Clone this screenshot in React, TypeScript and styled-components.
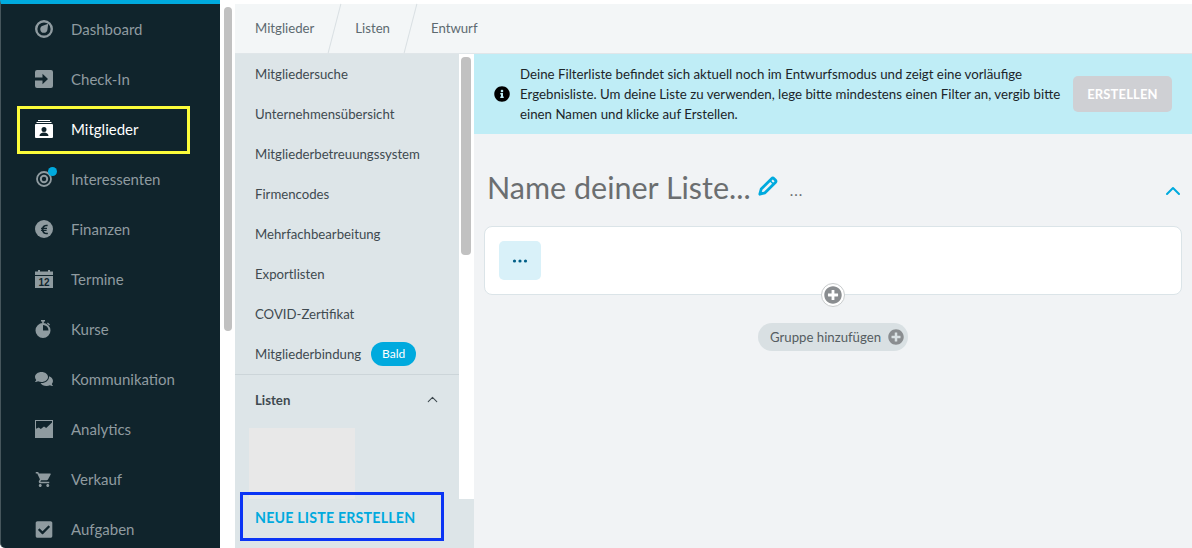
import React from "react";
import styled, { createGlobalStyle } from "styled-components";
import { FaComments, FaCheckSquare, FaInfoCircle, FaPlusCircle, FaEuroSign } from "react-icons/fa";
import { MdShoppingCart } from "react-icons/md";
import { ChevronUp } from "lucide-react";

const GlobalStyle = createGlobalStyle`
  html, body { margin: 0; padding: 0; height: 100%; overflow: hidden; }
  body { font-family: "Lato", "Noto Sans", sans-serif; background: #fff; }
  *, *::before, *::after { box-sizing: border-box; }
`;

const IconDashboard = () => (
  <svg viewBox="0 0 18 18" width="18" height="18" fill="currentColor">
    <path fillRule="evenodd" d="M9 0a9 9 0 1 1 0 18A9 9 0 0 1 9 0Zm0 2.400a6.600 6.600 0 1 0 0 13.200 6.600 6.600 0 0 0 0-13.200Z" />
    <path d="M13.200 3.800 12.400 10a3.600 3.600 0 1 1-4.600-4.200l5.400-2Z" />
  </svg>
);
const IconCheckIn = () => (
  <svg viewBox="0 0 18 18" width="18" height="18" fill="currentColor">
    <path d="M2 0h14a2 2 0 0 1 2 2v14a2 2 0 0 1-2 2H2a2 2 0 0 1-2-2v-5.400h7.500v3.600L13 9 7.500 3.800v3.600H0V2a2 2 0 0 1 2-2Z" />
  </svg>
);
const IconMembers = () => (
  <svg viewBox="0 0 18 18" width="18" height="18" fill="currentColor">
    <path d="M3 0h12v1H3zM1.500 2h15v1h-15z" />
    <path fillRule="evenodd" d="M1 4h16a1 1 0 0 1 1 1v12a1 1 0 0 1-1 1H1a1 1 0 0 1-1-1V5a1 1 0 0 1 1-1Zm8 3a2.500 2.500 0 1 0 0 5 2.500 2.500 0 0 0 0-5Zm-4.500 9h9c0-2-1.800-3.500-4.500-3.500S4.500 14 4.500 16Z" />
  </svg>
);
const IconLeads = () => (
  <svg viewBox="0 0 18 18" width="18" height="18" fill="none" stroke="currentColor">
    <circle cx="9" cy="9" r="7" strokeWidth="1.800" />
    <circle cx="9" cy="9" r="3.200" strokeWidth="2" />
  </svg>
);
const IconCalendar = () => (
  <svg viewBox="0 0 18 18" width="18" height="18" fill="currentColor">
    <path d="M3 0h2v1.500h8V0h2v1.500h3V5H0V1.500h3V0Z" />
    <path d="M0 6h18v12H0z" />
    <text x="9" y="15.800" textAnchor="middle" fontSize="10" fontWeight="700" fontFamily="Liberation Sans, sans-serif" fill="#10242c">12</text>
  </svg>
);
const IconTimer = () => (
  <svg viewBox="0 0 18 18" width="18" height="18" fill="currentColor">
    <path d="M6 0h4v1.500H6zM7.200 1.500h1.600v2H7.200z" />
    <path fillRule="evenodd" d="M8 3a7.500 7.500 0 1 1 0 15A7.500 7.500 0 0 1 8 3Zm0 2v5.500h5.500A5.500 5.500 0 0 0 8 5Z" />
    <path d="m12.800 2.500 2.200 2-.8.900-2.200-2z" />
  </svg>
);
const IconChart = () => (
  <svg viewBox="0 0 18 18" width="18" height="18" fill="currentColor">
    <path fillRule="evenodd" d="M0 0h18v18H0V0Zm1 1v7.800l2.800-1.300 2 1.400 3.200-2.400 2.200 1.500L17 2.500V1H1Z" />
  </svg>
);
const IconPencil = () => (
  <svg viewBox="0 0 20 20" width="20" height="20" fill="none" stroke="currentColor" strokeWidth="2.800" strokeLinejoin="round">
    <path d="M1.800 18.200 3.200 13 13.800 2.400a1.400 1.400 0 0 1 2 0l1.800 1.800a1.400 1.400 0 0 1 0 2L7 16.800 1.800 18.200Z" />
    <path d="m11.800 4.400 3.800 3.800" strokeWidth="1.500" />
  </svg>
);
const IconDots = () => (
  <svg viewBox="0 0 16 4" width="16" height="4" fill="currentColor">
    <circle cx="2.500" cy="2" r="1.600" />
    <circle cx="8" cy="2" r="1.600" />
    <circle cx="13.500" cy="2" r="1.600" />
  </svg>
);

const navItems = [
  { label: "Dashboard", icon: <IconDashboard /> },
  { label: "Check-In", icon: <IconCheckIn /> },
  { label: "Mitglieder", icon: <IconMembers />, active: true },
  { label: "Interessenten", icon: <IconLeads />, dot: true },
  { label: "Finanzen", icon: <EuroBadge><FaEuroSign size={11} /></EuroBadge> },
  { label: "Termine", icon: <IconCalendar /> },
  { label: "Kurse", icon: <IconTimer /> },
  { label: "Kommunikation", icon: <FaComments size={18} /> },
  { label: "Analytics", icon: <IconChart /> },
  { label: "Verkauf", icon: <MdShoppingCart size={23} /> },
  { label: "Aufgaben", icon: <FaCheckSquare size={19} /> },
];

const subItems = [
  "Mitgliedersuche",
  "Unternehmensübersicht",
  "Mitgliederbetreuungssystem",
  "Firmencodes",
  "Mehrfachbearbeitung",
  "Exportlisten",
  "COVID-Zertifikat",
];

export default function App() {
  return (
    <Page>
      <GlobalStyle />
      <Sidebar>
        {navItems.map((item) => (
          <NavItem key={item.label} $active={item.active}>
            <NavIcon>
              {item.icon}
              {item.dot && <NavDot />}
            </NavIcon>
            {item.label}
          </NavItem>
        ))}
      </Sidebar>
      <PageScroll>
        <Thumb $height={324} />
      </PageScroll>
      <Content>
        <Breadcrumbs>
          <Crumb>Mitglieder</Crumb>
          <Crumb>Listen</Crumb>
          <Crumb $last>Entwurf</Crumb>
        </Breadcrumbs>
        <Body>
          <SubNav>
            <SubScrollArea>
              <SubList>
                {subItems.map((label) => (
                  <SubItem key={label}>{label}</SubItem>
                ))}
                <SubItem>
                  Mitgliederbindung
                  <Badge>Bald</Badge>
                </SubItem>
                <ListsHeader>
                  Listen
                  <ChevronUp size={17} strokeWidth={1.5} />
                </ListsHeader>
                <Placeholder />
              </SubList>
              <SubTrack>
                <Thumb $height={198} />
              </SubTrack>
            </SubScrollArea>
            <SubFooter>
              <NewList>NEUE LISTE ERSTELLEN</NewList>
            </SubFooter>
          </SubNav>
          <Main>
            <Banner>
              <BannerIcon>
                <FaInfoCircle size={16} />
              </BannerIcon>
              <BannerText>
                Deine Filterliste befindet sich aktuell noch im Entwurfsmodus und zeigt eine vorläufige
                Ergebnisliste. Um deine Liste zu verwenden, lege bitte mindestens einen Filter an, vergib bitte
                einen Namen und klicke auf Erstellen.
              </BannerText>
              <CreateButton>ERSTELLEN</CreateButton>
            </Banner>
            <Editor>
              <TitleRow>
                <Title>Name deiner Liste...</Title>
                <PencilWrap>
                  <IconPencil />
                </PencilWrap>
                <TitleMore>...</TitleMore>
                <Collapse>
                  <ChevronUp size={24} strokeWidth={2} />
                </Collapse>
              </TitleRow>
              <FilterCard>
                <DotsButton>
                  <IconDots />
                </DotsButton>
                <CardAdd>
                  <FaPlusCircle size={18} />
                </CardAdd>
              </FilterCard>
              <GroupRow>
                <GroupButton>
                  Gruppe hinzufügen
                  <FaPlusCircle size={16} />
                </GroupButton>
              </GroupRow>
            </Editor>
          </Main>
        </Body>
      </Content>
    </Page>
  );
}

function EuroBadge({ children }: { children: React.ReactNode }) {
  return <EuroCircle>{children}</EuroCircle>;
}

const Page = styled.div`
  display: flex;
  width: 1192px;
  height: 548px;
  overflow: hidden;
`;

const Sidebar = styled.nav`
  flex: 0 0 220px;
  background: #10242c;
  border-top: 4px solid #00aade;
  border-left: 1px solid #46565c;
  border-bottom-left-radius: 5px;
  overflow: hidden;
`;

const NavItem = styled.div<{ $active?: boolean }>`
  position: relative;
  display: flex;
  align-items: center;
  height: 50px;
  flex-shrink: 0;
  padding-left: 34px;
  font-size: 15px;
  color: ${(p) => (p.$active ? "#ffffff" : "#8f9ba0")};

  ${(p) =>
    p.$active &&
    `
    &::after {
      content: "";
      position: absolute;
      left: 16px;
      top: 2px;
      width: 173px;
      height: 48px;
      border: 3px solid #fcfc3a;
    }
  `}
`;

const NavIcon = styled.span`
  position: relative;
  display: flex;
  align-items: center;
  justify-content: center;
  width: 18px;
  height: 20px;
  margin-right: 18px;
`;

const NavDot = styled.span`
  position: absolute;
  top: -2px;
  right: -4px;
  width: 9px;
  height: 9px;
  border-radius: 50%;
  background: #00aade;
`;

const EuroCircle = styled.span`
  display: flex;
  align-items: center;
  justify-content: center;
  width: 18px;
  height: 18px;
  border-radius: 50%;
  background: #8f9ba0;
  color: #10242c;
`;

const PageScroll = styled.div`
  flex: 0 0 15px;
  padding: 7px 3px 0 4px;
  background: #ffffff;
`;

const Thumb = styled.div<{ $height: number }>`
  height: ${(p) => p.$height}px;
  border-radius: 4px;
  background: #c1c1c1;
`;

const Content = styled.div`
  flex: 1;
  display: flex;
  flex-direction: column;
  padding-top: 4px;
  min-width: 0;
`;

const Breadcrumbs = styled.div`
  display: flex;
  align-items: center;
  flex: 0 0 50px;
  padding-left: 20px;
  background: #f3f6f7;
  border-bottom: 1px solid #e0e6e9;
`;

const Crumb = styled.span<{ $last?: boolean }>`
  position: relative;
  top: -1px;
  font-size: 13.2px;
  color: #5d6a70;
  margin-right: 41px;

  ${(p) =>
    !p.$last &&
    `
    &::after {
      content: "";
      position: absolute;
      right: -21px;
      top: -17px;
      width: 1px;
      height: 51px;
      background: #d9e0e3;
      transform: rotate(14.500deg);
    }
  `}
`;

const Body = styled.div`
  flex: 1;
  display: flex;
  min-height: 0;
`;

const SubNav = styled.aside`
  flex: 0 0 239px;
  display: flex;
  flex-direction: column;
  background: #dde5e8;
`;

const SubScrollArea = styled.div`
  flex: 0 0 445px;
  display: flex;
  overflow: hidden;
`;

const SubList = styled.div`
  flex: 1;
  min-width: 0;
`;

const SubItem = styled.div`
  display: flex;
  align-items: center;
  height: 40px;
  padding-left: 20px;
  font-size: 13.2px;
  color: #3f4a50;
`;

const Badge = styled.span`
  margin-left: 10px;
  width: 45px;
  height: 24px;
  line-height: 24px;
  border-radius: 12px;
  background: #00aade;
  color: #fff;
  font-size: 12px;
  text-align: center;
`;

const ListsHeader = styled.div`
  display: flex;
  align-items: center;
  justify-content: space-between;
  height: 54px;
  padding: 0 18px 4px 20px;
  border-top: 1px solid #ccd5d9;
  font-size: 13.2px;
  font-weight: 700;
  color: #3f4a50;
`;

const Placeholder = styled.div`
  width: 106px;
  height: 71px;
  margin-left: 14px;
  background: #e8e8e8;
`;

const SubTrack = styled.div`
  flex: 0 0 15px;
  padding: 3px 3px 0 2px;
  background: #ffffff;
`;

const SubFooter = styled.div`
  flex: 1;
  padding-left: 20px;
`;

const NewList = styled.div`
  position: relative;
  height: 38px;
  line-height: 38px;
  font-size: 14.2px;
  font-weight: 700;
  color: #00aade;
  letter-spacing: 0.2px;

  &::after {
    content: "";
    position: absolute;
    left: -15px;
    top: -7px;
    width: 204px;
    height: 49px;
    border: 3px solid #0a34f5;
  }
`;

const Main = styled.main`
  flex: 1;
  display: flex;
  flex-direction: column;
  min-width: 0;
  background: #f1f3f5;
`;

const Banner = styled.div`
  display: flex;
  align-items: center;
  flex: 0 0 80px;
  padding: 0 20px;
  background: #bfedf6;
`;

const BannerIcon = styled.span`
  display: flex;
  color: #000;
  margin-right: 10px;
`;

const BannerText = styled.p`
  width: 553px;
  margin: 0;
  font-size: 13.27px;
  line-height: 20px;
  color: #1c2529;
`;

const CreateButton = styled.button`
  width: 99px;
  height: 36px;
  margin-left: auto;
  border: none;
  border-radius: 5px;
  background: #cfd0d4;
  color: #fff;
  font-family: inherit;
  font-size: 13px;
  font-weight: 700;
  letter-spacing: 0.15px;
`;

const Editor = styled.div`
  padding: 0 10px;
`;

const TitleRow = styled.div`
  display: flex;
  align-items: center;
  height: 92px;
  padding: 14px 0 0 3px;
`;

const Title = styled.h1`
  margin: 0;
  font-size: 30.5px;
  font-weight: 400;
  color: #6b6e70;
`;

const PencilWrap = styled.span`
  display: flex;
  margin: -3px 0 0 7px;
  color: #00aade;
`;

const TitleMore = styled.span`
  margin: 6px 0 0 12px;
  font-size: 15px;
  letter-spacing: 1px;
  color: #6b6e70;
`;

const Collapse = styled.span`
  display: flex;
  margin: 8px -3px 0 auto;
  color: #00aade;
`;

const FilterCard = styled.div`
  position: relative;
  height: 69px;
  padding: 14px;
  border: 1px solid #dbe4e8;
  border-radius: 8px;
  background: #ffffff;
`;

const DotsButton = styled.div`
  display: flex;
  align-items: center;
  justify-content: center;
  width: 42px;
  height: 39px;
  border-radius: 5px;
  background: #d9f1f9;
  color: #005f87;
`;

const CardAdd = styled.span`
  position: absolute;
  left: 336px;
  bottom: -13px;
  display: flex;
  align-items: center;
  justify-content: center;
  width: 24px;
  height: 24px;
  border: 1px solid #c9cccd;
  border-radius: 50%;
  background: #ffffff;
  color: #8a8d90;
`;

const GroupRow = styled.div`
  display: flex;
  justify-content: center;
  margin-top: 28px;
`;

const GroupButton = styled.div`
  display: flex;
  align-items: center;
  justify-content: space-between;
  width: 150px;
  height: 28px;
  padding: 0 4px 0 12px;
  border-radius: 14px;
  background: #d9e0e3;
  font-size: 13.2px;
  color: #555d61;

  svg {
    color: #8a8d90;
  }
`;
